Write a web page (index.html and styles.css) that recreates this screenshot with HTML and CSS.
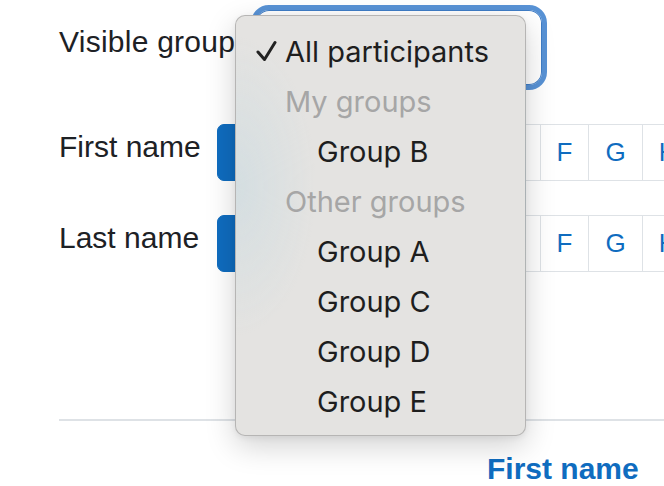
FILE: index.html
```html
<!DOCTYPE html>
<html lang="en">
<head>
    <meta charset="UTF-8">
    <meta name="viewport" content="width=device-width, initial-scale=1.0">
    <title>Participants</title>
    <link rel="stylesheet" href="styles.css">
</head>
<body>
    <div class="page">
        <div class="group-select">
            <label class="group-label" for="groups">Visible groups</label>
            <div class="select-box" id="groups">All participants</div>
        </div>

        <div class="initialbar">
            <span class="initialbar-label">First name</span>
            <ul class="letters">
                <li class="active"><a href="#">All</a></li>
                <li><a href="#">A</a></li>
                <li><a href="#">B</a></li>
                <li><a href="#">C</a></li>
                <li><a href="#">D</a></li>
                <li><a href="#">E</a></li>
                <li><a href="#">F</a></li>
                <li><a href="#">G</a></li>
                <li><a href="#">H</a></li>
                <li><a href="#">I</a></li>
                <li><a href="#">J</a></li>
            </ul>
        </div>

        <div class="initialbar">
            <span class="initialbar-label">Last name</span>
            <ul class="letters">
                <li class="active"><a href="#">All</a></li>
                <li><a href="#">A</a></li>
                <li><a href="#">B</a></li>
                <li><a href="#">C</a></li>
                <li><a href="#">D</a></li>
                <li><a href="#">E</a></li>
                <li><a href="#">F</a></li>
                <li><a href="#">G</a></li>
                <li><a href="#">H</a></li>
                <li><a href="#">I</a></li>
                <li><a href="#">J</a></li>
            </ul>
        </div>

        <hr class="divider">

        <div class="table-head">
            <a class="sort-link" href="#">First name</a>
        </div>
    </div>

    <!-- open native select popup -->
    <div class="popup-menu">
        <div class="option">
            <span class="tick">
                <svg width="21" height="22" viewBox="0 0 21 22">
                    <polyline points="2,12 8.5,19.5 19,2.5" fill="none" stroke="#222" stroke-width="3" stroke-linejoin="round" stroke-linecap="round"/>
                </svg>
            </span>
            <span class="text">All participants</span>
        </div>
        <div class="option heading"><span class="tick"></span><span class="text">My groups</span></div>
        <div class="option sub"><span class="tick"></span><span class="text">Group B</span></div>
        <div class="option heading"><span class="tick"></span><span class="text">Other groups</span></div>
        <div class="option sub"><span class="tick"></span><span class="text">Group A</span></div>
        <div class="option sub"><span class="tick"></span><span class="text">Group C</span></div>
        <div class="option sub"><span class="tick"></span><span class="text">Group D</span></div>
        <div class="option sub"><span class="tick"></span><span class="text">Group E</span></div>
    </div>
</body>
</html>
```

FILE: styles.css
```css
html, body {
    overflow: hidden;
}
body {
    margin: 0;
    font-family: "Liberation Sans", Arial, sans-serif;
    color: #1d2125;
    background-color: #fff;
}
.page {
    padding: 5px 0 0 59px;
}
.group-select {
    display: flex;
    align-items: flex-start;
    gap: 1px;
}
.group-label {
    font-size: 30px;
    line-height: 45px;
    margin-top: 14px;
    letter-spacing: 0.25px;
    white-space: nowrap;
}
.select-box {
    flex: none;
    width: 296px;
    height: 85px;
    box-sizing: border-box;
    border: 5px solid #5892d5;
    border-radius: 18px;
    background-color: #fff;
    box-shadow: inset 0 0 0 1px #3f7dc6;
    font-size: 30px;
    line-height: 75px;
    padding-left: 20px;
}
.initialbar {
    display: flex;
    margin-top: 34px;
}
.initialbar-label {
    flex: 0 0 158px;
    font-size: 30px;
    line-height: 45px;
    white-space: nowrap;
}
.letters {
    display: flex;
    list-style: none;
    margin: 0;
    padding: 0;
}
.letters a {
    display: block;
    padding: 8px 16px;
    margin-left: -1px;
    font-size: 26px;
    line-height: 39px;
    color: #0f6cbf;
    text-decoration: none;
    border: 1px solid #dee2e6;
}
.letters .active a {
    margin-left: 0;
    padding: 8px 19px;
    color: #fff;
    background-color: #0f6cbf;
    border-color: #0f6cbf;
    border-radius: 7px 0 0 7px;
}
.divider {
    margin: 147px 0 0;
    border: 0;
    border-top: 2px solid #dee2e6;
}
.table-head {
    margin-top: 25px;
    padding-left: 428px;
}
.sort-link {
    font-size: 30px;
    font-weight: bold;
    line-height: 45px;
    color: #0f6cbf;
    text-decoration: none;
}
.popup-menu {
    position: absolute;
    left: 235px;
    top: 15px;
    width: 291px;
    box-sizing: border-box;
    padding: 10px 0 9px;
    font-family: Inter, "Noto Sans", sans-serif;
    font-size: 29px;
    color: #1e1e1e;
    background-color: #e4e3e1;
    background-image: radial-gradient(ellipse 80px 150px at 0 170px, rgba(175, 210, 225, 0.3), rgba(175, 210, 225, 0));
    border: 1px solid rgba(0, 0, 0, 0.2);
    border-radius: 10px;
    box-shadow: 0 10px 30px rgba(0, 0, 0, 0.18), 0 2px 6px rgba(0, 0, 0, 0.06);
}
.option {
    display: flex;
    align-items: center;
    height: 50px;
    padding-left: 20px;
    white-space: nowrap;
}
.tick {
    flex: none;
    width: 29px;
    display: flex;
    align-items: center;
}
.option.heading {
    color: #a6a6a6;
}
.option.sub .text {
    padding-left: 32px;
}
```
